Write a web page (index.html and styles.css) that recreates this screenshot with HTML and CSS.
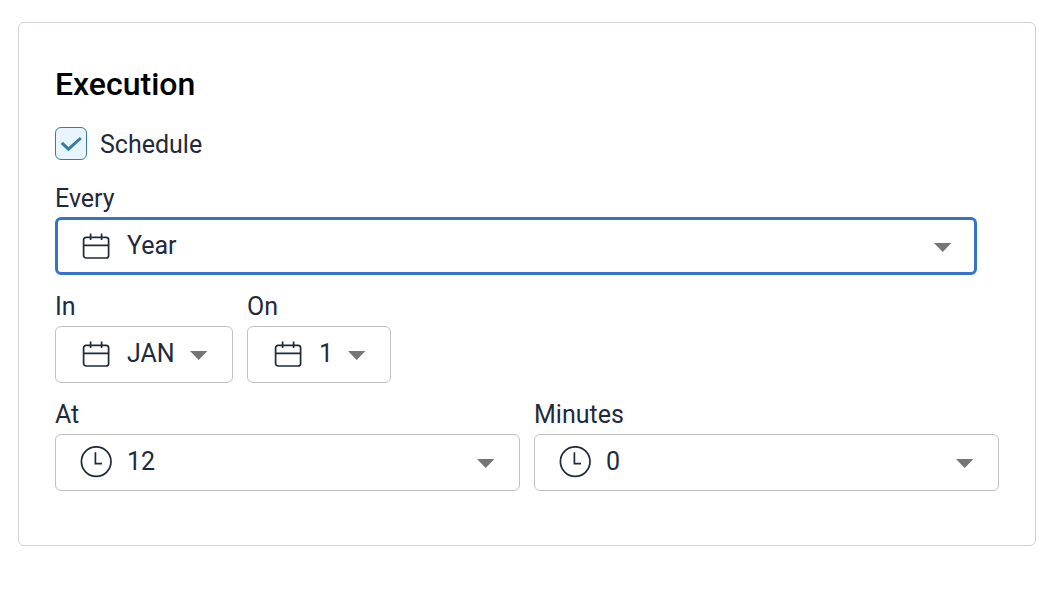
FILE: index.html
```html
<!DOCTYPE html>
<html lang="en">
<head>
<meta charset="utf-8">
<meta name="viewport" content="width=device-width, initial-scale=1">
<title>Execution</title>
<link rel="stylesheet" href="styles.css">
</head>
<body>
<svg class="sprite" aria-hidden="true">
  <symbol id="calendar" viewBox="0 0 32 32">
    <rect x="3.6" y="7.3" width="25" height="20.7" rx="2.5"/>
    <path d="M3.6 15.4H28.6M10.6 3.5V10M21.6 3.5V10"/>
  </symbol>
  <symbol id="clock" viewBox="0 0 32 32">
    <circle cx="16.2" cy="15.6" r="14.8"/>
    <path d="M15.4 6.2V17.6H22"/>
  </symbol>
  <symbol id="caret" viewBox="0 0 18 9">
    <path d="M0 0H17.4L8.7 9Z"/>
  </symbol>
</svg>
<main class="card">
  <h1 class="title">Execution</h1>
  <form class="form">
    <label class="check">
      <span class="check-control">
        <input class="check-input" type="checkbox" checked>
        <svg class="check-mark" viewBox="0 0 32 33" aria-hidden="true"><path d="M6.8 15.8L13.5 22.2L25.8 11"/></svg>
      </span>
      Schedule
    </label>
    <div class="row">
      <div class="field field-wide">
        <label for="every">Every</label>
        <div class="picker">
          <select class="select select-active" id="every"><option>Hour</option><option>Day</option><option>Month</option><option selected>Year</option></select>
          <svg class="icon" aria-hidden="true"><use href="#calendar"/></svg>
          <svg class="caret" aria-hidden="true"><use href="#caret"/></svg>
        </div>
      </div>
    </div>
    <div class="row">
      <div class="field field-month">
        <label for="month">In</label>
        <div class="picker">
          <select class="select" id="month"><option selected>JAN</option><option>FEB</option><option>MAR</option></select>
          <svg class="icon" aria-hidden="true"><use href="#calendar"/></svg>
          <svg class="caret" aria-hidden="true"><use href="#caret"/></svg>
        </div>
      </div>
      <div class="field field-day">
        <label for="day">On</label>
        <div class="picker">
          <select class="select" id="day"><option selected>1</option><option>2</option><option>3</option></select>
          <svg class="icon" aria-hidden="true"><use href="#calendar"/></svg>
          <svg class="caret" aria-hidden="true"><use href="#caret"/></svg>
        </div>
      </div>
    </div>
    <div class="row">
      <div class="field field-grow">
        <label for="hour">At</label>
        <div class="picker">
          <select class="select" id="hour"><option>11</option><option selected>12</option></select>
          <svg class="icon" aria-hidden="true"><use href="#clock"/></svg>
          <svg class="caret" aria-hidden="true"><use href="#caret"/></svg>
        </div>
      </div>
      <div class="field field-grow">
        <label for="minutes">Minutes</label>
        <div class="picker">
          <select class="select" id="minutes"><option selected>0</option><option>30</option></select>
          <svg class="icon" aria-hidden="true"><use href="#clock"/></svg>
          <svg class="caret" aria-hidden="true"><use href="#caret"/></svg>
        </div>
      </div>
    </div>
  </form>
</main>
</body>
</html>
```

FILE: styles.css
```css
* { box-sizing: border-box; }

body {
  margin: 22px 6px 22px 18px;
  background: #fff;
  color: #1f2a3a;
  font: 400 25px/30px Roboto, sans-serif;
}

.sprite { display: none; }

.card {
  padding: 42px 36px 54px;
  border: 1px solid #d1d3dc;
  border-radius: 6px;
}

.title {
  margin: 0 0 24px;
  color: #000;
  font-size: 32px;
  font-weight: 500;
  line-height: 38px;
}

.form {
  display: flex;
  flex-direction: column;
  gap: 17px;
}

.check {
  display: flex;
  align-items: flex-end;
  align-self: flex-start;
  gap: 13px;
  margin-bottom: 7px;
}

.check-control { display: grid; }

.check-input,
.check-mark {
  grid-area: 1 / 1;
  width: 32px;
  height: 33px;
  margin: 0;
}

.check-input {
  appearance: none;
  border: 1px solid #357ca5;
  border-radius: 6px;
  background: #e9f5fc;
}

.check-mark {
  fill: none;
  stroke: #357ca5;
  stroke-width: 3;
  pointer-events: none;
  visibility: hidden;
}

.check-input:checked + .check-mark { visibility: visible; }

.row {
  display: flex;
  gap: 14px;
}

.field {
  display: flex;
  flex-direction: column;
  gap: 4px;
}

.field-wide { flex: 1; margin-right: 22px; }
.field-month { width: 178px; }
.field-day { width: 144px; }
.field-grow { flex: 1; }

.picker { display: grid; }

.picker > * { grid-area: 1 / 1; }

.select {
  appearance: none;
  width: 100%;
  height: 57px;
  padding: 0 50px 2px 71px;
  border: 1px solid #c1c1c1;
  border-radius: 6px;
  outline: none;
  background: #fff;
  color: inherit;
  font: inherit;
}

.select-active,
.select:focus {
  height: 58px;
  margin-top: -1px;
  padding-bottom: 0;
  padding-left: 69px;
  border: 3px solid #3572cc;
}

.icon {
  width: 32px;
  height: 32px;
  margin: 12px 0 0 25px;
  fill: none;
  stroke: #1f2a3a;
  stroke-width: 1.7;
  pointer-events: none;
}

.caret {
  justify-self: end;
  width: 18px;
  height: 9px;
  margin: 25px 25px 0 0;
  fill: #757575;
  pointer-events: none;
}
```
